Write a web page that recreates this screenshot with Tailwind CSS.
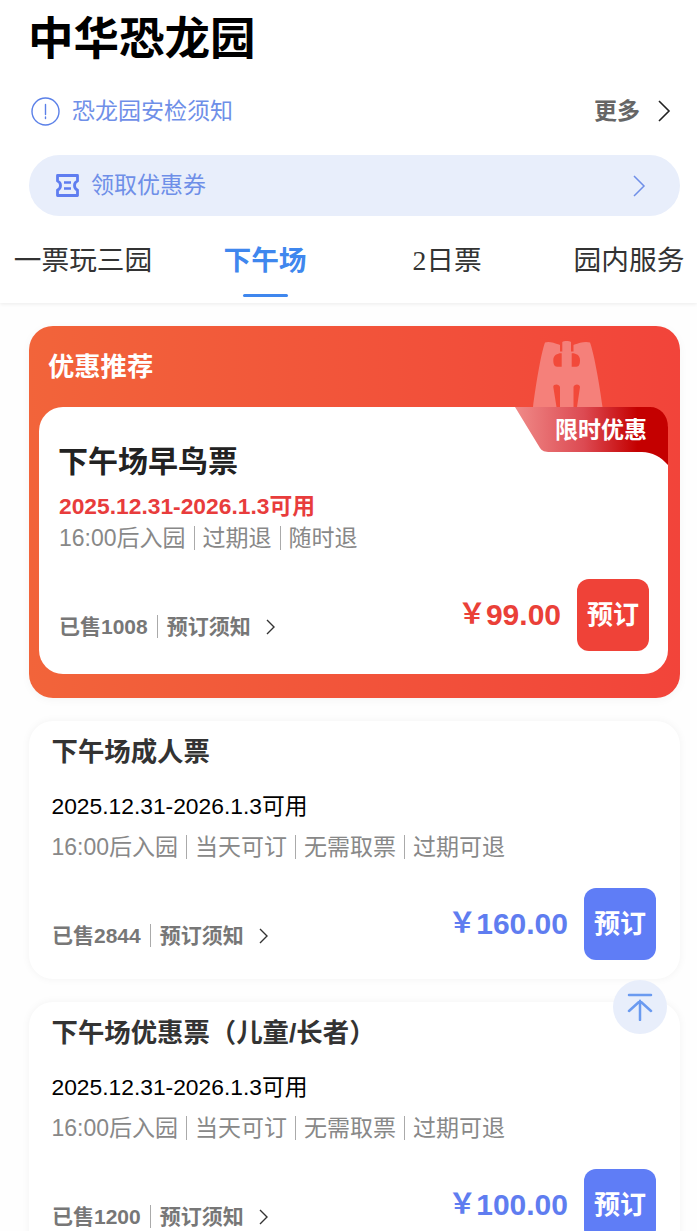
<!DOCTYPE html>
<html>
<head>
    <meta charset="utf-8">
    <title>中华恐龙园</title>
    <script src="https://cdn.jsdelivr.net/npm/@tailwindcss/browser@4"></script>
</head>
<body class="bg-white">
<div class="relative h-[1231px] w-[697px] overflow-hidden bg-[#fefefe] font-['Liberation_Sans','Noto_Sans_CJK_SC',sans-serif]">
    <!-- Header -->
    <div class="h-[303px] bg-white shadow-[0_1px_4px_rgba(0,0,0,0.08)]">
        <h1 class="pl-[28px] pt-[10px] text-[45.500px] leading-[60px] font-bold text-black">中华恐龙园</h1>

        <div class="mt-[11px] flex h-[60px] items-center pl-[31px] pr-[26px]">
            <svg class="h-[29px] w-[29px]" viewBox="0 0 29 29" fill="none" stroke="#5b80e8" stroke-width="1.4">
                <circle cx="14.5" cy="14.5" r="13.5"></circle>
                <path d="M14.5 7.5v10M14.5 20v1.6" stroke-linecap="round"></path>
            </svg>
            <span class="ml-[12px] flex-1 text-[23px] text-[#6f8fe8]">恐龙园安检须知</span>
            <span class="text-[23px] font-bold text-[#666]">更多</span>
            <svg class="ml-[17px] h-[24px] w-[14px]" viewBox="0 0 14 24" fill="none" stroke="#222" stroke-width="1.6">
                <path d="M2 2l10 10L2 22"></path>
            </svg>
        </div>

        <div class="ml-[29px] mt-[14px] flex h-[61px] w-[651px] items-center rounded-[31px] bg-[#e8eefb] pl-[26px] pr-[34px]">
            <svg class="h-[25px] w-[25px]" viewBox="0 0 25 25" fill="none" stroke="#5f7df0" stroke-width="2.800" stroke-linejoin="round">
                <path d="M2.500 2.500H22.500V8C18.500 9.500 18.500 15.500 22.500 17V22.500H2.500V17C6.500 15.500 6.500 9.500 2.500 8Z"></path>
                <path d="M9 9.500h7M9 15.500h7" stroke-width="2.400"></path>
            </svg>
            <span class="ml-[11px] flex-1 text-[23px] text-[#6f8fe8]">领取优惠券</span>
            <svg class="h-[24px] w-[14px]" viewBox="0 0 14 24" fill="none" stroke="#6f8fe8" stroke-width="1.5">
                <path d="M2 2l10 10L2 22"></path>
            </svg>
        </div>

        <!-- Tabs -->
        <div class="-ml-[8px] mt-[23px] flex w-[728px] text-[27.700px] leading-[44px] text-[#333]">
            <div class="w-[182px] text-center">一票玩三园</div>
            <div class="relative w-[182px] text-center font-bold text-[#3f87ee]">
                下午场
                <div class="absolute left-[69px] top-[55px] h-[3px] w-[45px] rounded-full bg-[#3f87ee]"></div>
            </div>
            <div class="w-[182px] text-center"><span class="font-['Liberation_Serif',serif]">2</span>日票</div>
            <div class="w-[182px] text-center">园内服务</div>
        </div>
    </div>

    <!-- Promo card -->
    <div class="relative ml-[29px] mt-[23px] h-[372px] w-[651px] rounded-[24px] bg-linear-to-r/srgb from-[#f2643a] to-[#f2443a] shadow-[0_2px_10px_rgba(0,0,0,0.04)]">
        <div class="pl-[19px] pt-[24px] text-[26.300px] leading-[34px] font-bold text-white">优惠推荐</div>
        <svg class="absolute left-[504px] top-[15px] h-[66px] w-[70px]" viewBox="0 0 70 66" fill="#f5807a">
            <path fill-rule="evenodd" d="M12 1.500C16 0 21 2 26 3.500L27 4V10.500L29.300 10.500V1C31 -.3 36 -.3 38 1V10.500L40.500 10.500V4L41.500 3.500C46 2 52 0 57 1.500C61 12 67 46 69.500 66H44L47 46C47 42.500 41 42.500 40.500 46V66H27V46C26.500 42.500 20 42.500 20.300 46L23.500 66H0C2.500 46 8 12 12 1.500ZM20.300 19C20.300 14 25 12 28.700 12.300V25.700H24C21.500 25.700 20.300 23.500 20.300 19ZM47 19C47 14 42.500 12 38.700 12.300V25.700H43.500C46 25.700 47 23.500 47 19Z"></path>
        </svg>

        <div class="absolute left-[10px] top-[81px] h-[267px] w-[629px] rounded-[24px] bg-white">
            <!-- ribbon -->
            <svg class="absolute right-0 top-0 h-[59px] w-[154px]" viewBox="0 0 154 59">
                <defs>
                    <linearGradient id="rib" x1="0" y1="0" x2="1" y2="0">
                        <stop offset="0" stop-color="#f08a88"></stop>
                        <stop offset="0.45" stop-color="#dc4a52"></stop>
                        <stop offset="0.8" stop-color="#c40000"></stop>
                        <stop offset="1" stop-color="#c40000"></stop>
                    </linearGradient>
                </defs>
                <path fill="url(#rib)" d="M1 0H136C146 0 154 8 154 20V58C147 50 138 45 128 45H36C31 45 28 44 26 41Z"></path>
            </svg>
            <div class="absolute right-[21px] top-[8px] text-[23px] leading-[30px] font-bold text-white">限时优惠</div>

            <div class="px-[20px] pt-[35px]">
                <div class="-ml-[1px] text-[30px] leading-[40px] font-bold text-[#222]">下午场早鸟票</div>
                <div class="mt-[9px] text-[22.800px] leading-[30px] font-bold text-[#e83c3c]">2025.12.31-2026.1.3可用</div>
                <div class="mt-[2px] flex items-center text-[23px] leading-[30px] text-[#888]">
                    <span>16:00后入园</span><span class="mx-[8px] h-[24px] w-px bg-[#aaa]"></span><span>过期退</span><span class="mx-[8px] h-[24px] w-px bg-[#aaa]"></span><span>随时退</span>
                </div>
            </div>

            <div class="absolute bottom-[23px] left-[20px] right-[19px] flex items-center">
                <div class="mt-[23px] flex flex-1 items-center text-[21px] font-bold text-[#777]">
                    <span>已售1008</span><span class="mx-[9px] h-[23px] w-px bg-[#aaa]"></span><span>预订须知</span>
                    <svg class="ml-[15px] h-[16px] w-[9px]" viewBox="0 0 9 16" fill="none" stroke="#333" stroke-width="1.4"><path d="M1 1l7 7-7 7"></path></svg>
                </div>
                <div class="flex items-center text-[30px] leading-[40px] font-bold text-[#ea4038]"><span class="text-[28px]">￥</span><span>99.00</span></div>
                <div class="ml-[16px] flex h-[72px] w-[72px] items-center justify-center rounded-[12px] bg-[#ef4238] text-[26px] font-bold text-white">预订</div>
            </div>
        </div>
    </div>

    <!-- Adult ticket -->
    <div class="relative ml-[29px] mt-[23px] h-[258px] w-[651px] rounded-[24px] bg-white px-[22.500px] pt-[13px] shadow-[0_0_8px_rgba(0,0,0,0.05)]">
        <div class="text-[26.400px] leading-[36px] font-bold text-[#333]">下午场成人票</div>
        <div class="mt-[21px] text-[22.800px] leading-[30px] text-black">2025.12.31-2026.1.3可用</div>
        <div class="mt-[11px] flex items-center text-[23px] leading-[30px] text-[#888]">
            <span>16:00后入园</span><span class="mx-[8px] h-[24px] w-px bg-[#aaa]"></span><span>当天可订</span><span class="mx-[8px] h-[24px] w-px bg-[#aaa]"></span><span>无需取票</span><span class="mx-[8px] h-[24px] w-px bg-[#aaa]"></span><span>过期可退</span>
        </div>
        <div class="absolute bottom-[19px] left-[23px] right-[24px] flex items-center">
            <div class="mt-[23px] flex flex-1 items-center text-[21px] font-bold text-[#777]">
                <span>已售2844</span><span class="mx-[9px] h-[23px] w-px bg-[#aaa]"></span><span>预订须知</span>
                <svg class="ml-[15px] h-[16px] w-[9px]" viewBox="0 0 9 16" fill="none" stroke="#333" stroke-width="1.4"><path d="M1 1l7 7-7 7"></path></svg>
            </div>
            <div class="flex items-center text-[30px] leading-[40px] font-bold text-[#5f7df0]"><span class="text-[28px]">￥</span><span>160.00</span></div>
            <div class="ml-[16px] flex h-[72px] w-[72px] items-center justify-center rounded-[12px] bg-[#5f7df6] text-[26px] font-bold text-white">预订</div>
        </div>
    </div>

    <!-- Discount ticket -->
    <div class="relative ml-[29px] mt-[23px] h-[258px] w-[651px] rounded-[24px] bg-white px-[22.500px] pt-[13px] shadow-[0_0_8px_rgba(0,0,0,0.05)]">
        <div class="text-[26.400px] leading-[36px] font-bold text-[#333]">下午场优惠票（儿童/长者）</div>
        <div class="mt-[21px] text-[22.800px] leading-[30px] text-black">2025.12.31-2026.1.3可用</div>
        <div class="mt-[11px] flex items-center text-[23px] leading-[30px] text-[#888]">
            <span>16:00后入园</span><span class="mx-[8px] h-[24px] w-px bg-[#aaa]"></span><span>当天可订</span><span class="mx-[8px] h-[24px] w-px bg-[#aaa]"></span><span>无需取票</span><span class="mx-[8px] h-[24px] w-px bg-[#aaa]"></span><span>过期可退</span>
        </div>
        <div class="absolute bottom-[19px] left-[23px] right-[24px] flex items-center">
            <div class="mt-[23px] flex flex-1 items-center text-[21px] font-bold text-[#777]">
                <span>已售1200</span><span class="mx-[9px] h-[23px] w-px bg-[#aaa]"></span><span>预订须知</span>
                <svg class="ml-[15px] h-[16px] w-[9px]" viewBox="0 0 9 16" fill="none" stroke="#333" stroke-width="1.4"><path d="M1 1l7 7-7 7"></path></svg>
            </div>
            <div class="flex items-center text-[30px] leading-[40px] font-bold text-[#5f7df0]"><span class="text-[28px]">￥</span><span>100.00</span></div>
            <div class="ml-[16px] flex h-[72px] w-[72px] items-center justify-center rounded-[12px] bg-[#5f7df6] text-[26px] font-bold text-white">预订</div>
        </div>
    </div>

    <!-- Back to top -->
    <div class="absolute left-[613px] top-[980px] flex h-[54px] w-[54px] items-center justify-center rounded-full bg-[#e8eefb]">
        <svg class="h-[28px] w-[26px]" viewBox="0 0 26 28" fill="none" stroke="#6a9af0" stroke-width="2.500" stroke-linecap="round">
            <path d="M2 2h22M13 27V8M2 18L13 8l11 10"></path>
        </svg>
    </div>
</div>
</body>
</html>
